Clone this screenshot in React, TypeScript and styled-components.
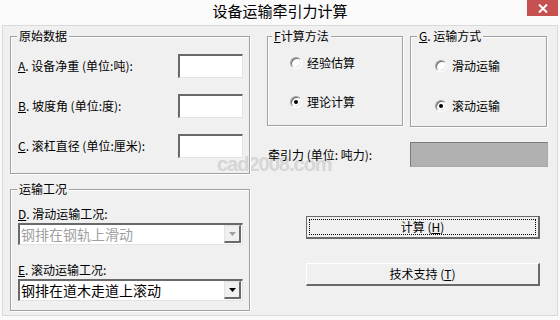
import React from 'react';
import styled, {createGlobalStyle, css} from 'styled-components';

const GlobalStyle = createGlobalStyle`
  html, body {
    margin: 0;
    padding: 0;
    background: #fafafa;
  }
  body {
    font-family: "Noto Sans CJK SC", "Liberation Sans", sans-serif;
    font-size: 12px;
    color: #000;
  }
`

const Underline = styled.span`
  text-decoration: underline;
`

const Radio: React.FC<{checked?: boolean, label: string}> = ({checked, label}) => (
    <RadioRow>
        <RadioCircle $checked={checked}/>
        <span>{label}</span>
    </RadioRow>
)

const Combo: React.FC<{value: string, disabled?: boolean}> = ({value, disabled}) => (
    <ComboBox>
        <ComboText $disabled={disabled}>{value}</ComboText>
        <DropButton>
            <svg width="7" height="4" viewBox="0 0 7 4">
                <polygon points="0,0 7,0 3.5,4" fill={disabled ? '#a0a0a0' : '#000'}/>
            </svg>
        </DropButton>
    </ComboBox>
)

export default function App() {
    return (
        <Window>
            <GlobalStyle/>
            <TitleBar>
                <Title>设备运输牵引力计算</Title>
                <CloseButton>
                    <svg width="10" height="9" viewBox="0 0 10 9">
                        <path d="M1 0.5 L9 8.5 M9 0.5 L1 8.5" stroke="#fff" strokeWidth="2"/>
                    </svg>
                </CloseButton>
            </TitleBar>

            <Client>
                <Watermark>cad2008.com</Watermark>

                <Group>
                    <Caption>原始数据</Caption>
                    <InputRows>
                        <FieldRow>
                            <span><Underline>A</Underline>. 设备净重 (单位:吨):</span>
                            <TextInput/>
                        </FieldRow>
                        <FieldRow>
                            <span><Underline>B</Underline>. 坡度角 (单位:度):</span>
                            <TextInput/>
                        </FieldRow>
                        <FieldRow>
                            <span><Underline>C</Underline>. 滚杠直径 (单位:厘米):</span>
                            <TextInput/>
                        </FieldRow>
                    </InputRows>
                </Group>

                <RightColumn>
                    <MethodRow>
                        <Group $width={136} $height={90}>
                            <Caption $left={4}><Underline>F</Underline>计算方法</Caption>
                            <RadioList $top={19} $left={22} $gap={25}>
                                <Radio label="经验估算"/>
                                <Radio label="理论计算" checked/>
                            </RadioList>
                        </Group>
                        <Group $width={137} $height={91}>
                            <Caption><Underline>G</Underline>. 运输方式</Caption>
                            <RadioList $top={22} $left={24} $gap={26}>
                                <Radio label="滑动运输"/>
                                <Radio label="滚动运输" checked/>
                            </RadioList>
                        </Group>
                    </MethodRow>
                    <ResultRow>
                        <ResultLabel>牵引力 (单位: 吨力):</ResultLabel>
                        <ResultBox/>
                    </ResultRow>
                </RightColumn>

                <Group>
                    <Caption>运输工况</Caption>
                    <ComboList>
                        <ComboLabel><Underline>D</Underline>. 滑动运输工况:</ComboLabel>
                        <Combo value="钢排在钢轨上滑动" disabled/>
                        <ComboLabel $spaced><Underline>E</Underline>. 滚动运输工况:</ComboLabel>
                        <Combo value="钢排在道木走道上滚动"/>
                    </ComboList>
                </Group>

                <Buttons>
                    <PushButton $default>
                        <FocusRect>计算 (<Underline>H</Underline>)</FocusRect>
                    </PushButton>
                    <PushButton>技术支持 (<Underline>T</Underline>)</PushButton>
                </Buttons>
            </Client>
        </Window>
    );
}

const Window = styled.div`
  width: 560px;
  height: 320px;
  display: flex;
  flex-direction: column;
  overflow: hidden;
`

const TitleBar = styled.div`
  height: 25px;
  display: grid;
  grid-template-columns: 1fr auto 1fr;
  align-items: start;
`

const Title = styled.div`
  grid-column: 2;
  font-size: 15px;
  line-height: 22px;
  color: #000;
`

const CloseButton = styled.div`
  grid-column: 3;
  justify-self: end;
  margin-right: 2px;
  width: 31px;
  height: 16px;
  background: #c75050;
  display: flex;
  align-items: center;
  justify-content: center;
`

const Client = styled.div`
  position: relative;
  margin: 0 2px;
  width: 556px;
  height: 291px;
  box-sizing: border-box;
  border: 1px solid #dadada;
  background: #f0f0f0;
  padding: 10px 0 0 7px;
  display: grid;
  grid-template-columns: 240px 281px;
  grid-template-rows: 138px 122px;
  column-gap: 17px;
  row-gap: 15px;
`

const Watermark = styled.div`
  position: absolute;
  left: 214px;
  top: 127px;
  font-family: "Liberation Sans", Arial, sans-serif;
  font-weight: bold;
  font-size: 20px;
  letter-spacing: -1px;
  color: #d6d6d6;
  pointer-events: none;
`

const Group = styled.div<{$width?: number, $height?: number}>`
  position: relative;
  box-sizing: border-box;
  width: ${p => p.$width ? p.$width + 'px' : 'auto'};
  height: ${p => p.$height ? p.$height + 'px' : 'auto'};
  border: 1px solid #a0a0a0;
  box-shadow: inset 1px 1px 0 #fff, 1px 1px 0 #fff;
`

const Caption = styled.div<{$left?: number}>`
  position: absolute;
  top: -8px;
  left: ${p => p.$left ?? 6}px;
  padding: 0 2px;
  background: #f0f0f0;
  line-height: 14px;
  white-space: nowrap;
`

const InputRows = styled.div`
  display: flex;
  flex-direction: column;
  gap: 16px;
  padding: 17px 6px 0 7px;
`

const FieldRow = styled.div`
  display: flex;
  justify-content: space-between;
  align-items: center;
  height: 24px;
  line-height: 14px;
  white-space: nowrap;
`

const sunken = css`
  box-sizing: border-box;
  border-style: solid;
  border-width: 2px 1px 1px 2px;
  border-color: #696969 #e3e3e3 #e3e3e3 #696969;
  background: #fff;
`

const TextInput = styled.div`
  ${sunken};
  width: 65px;
  height: 24px;
`

const RightColumn = styled.div`
  display: flex;
  flex-direction: column;
`

const MethodRow = styled.div`
  display: flex;
  gap: 7px;
  align-items: flex-start;
`

const RadioList = styled.div<{$top: number, $left: number, $gap: number}>`
  display: flex;
  flex-direction: column;
  gap: ${p => p.$gap}px;
  padding: ${p => p.$top}px 0 0 ${p => p.$left}px;
`

const RadioRow = styled.div`
  display: flex;
  align-items: center;
  gap: 5px;
  height: 14px;
  line-height: 14px;
`

const RadioCircle = styled.span<{$checked?: boolean}>`
  position: relative;
  box-sizing: border-box;
  width: 12px;
  height: 12px;
  border-radius: 50%;
  border: 1px solid;
  border-color: #a0a0a0 #fff #fff #a0a0a0;
  background: #fff;
  box-shadow: inset 1px 1px 0 #696969, inset -1px -1px 0 #e3e3e3;

  &::after {
    content: "";
    display: ${p => p.$checked ? 'block' : 'none'};
    position: absolute;
    left: 3px;
    top: 3px;
    width: 4px;
    height: 4px;
    border-radius: 50%;
    background: #000;
  }
`

const ResultRow = styled.div`
  display: flex;
  justify-content: space-between;
  align-items: center;
  margin-top: 15px;
  padding-left: 1px;
  line-height: 14px;
  white-space: nowrap;
`

const ResultLabel = styled.span`
  position: relative;
  z-index: 1;
`

const ResultBox = styled.div`
  box-sizing: border-box;
  width: 138px;
  height: 25px;
  background: #b1b1b1;
  border-style: solid;
  border-width: 1px;
  border-color: #7a7a7a #a8a8a8 #a8a8a8 #7a7a7a;
`

const ComboList = styled.div`
  display: flex;
  flex-direction: column;
  padding: 17px 6px 0 7px;
`

const ComboLabel = styled.div<{$spaced?: boolean}>`
  line-height: 14px;
  margin-top: ${p => p.$spaced ? 18 : 0}px;
  margin-bottom: 2px;
`

const ComboBox = styled.div`
  ${sunken};
  display: flex;
  height: 22px;
`

const ComboText = styled.div<{$disabled?: boolean}>`
  flex: 1;
  padding-left: 1px;
  font-size: 14px;
  line-height: 18px;
  color: ${p => p.$disabled ? '#a0a0a0' : '#000'};
  white-space: nowrap;
  overflow: hidden;
`

const DropButton = styled.div`
  box-sizing: border-box;
  width: 17px;
  height: 18px;
  margin: 0 1px 0 0;
  background: #f0f0f0;
  border-style: solid;
  border-width: 1px 2px 2px 1px;
  border-color: #e3e3e3 #696969 #696969 #e3e3e3;
  display: flex;
  align-items: center;
  justify-content: center;
`

const Buttons = styled.div`
  display: flex;
  flex-direction: column;
  gap: 24px;
  padding: 27px 0 0 39px;
`

const PushButton = styled.div<{$default?: boolean}>`
  box-sizing: border-box;
  width: 234px;
  height: 23px;
  background: #f0f0f0;
  display: flex;
  align-items: center;
  justify-content: center;
  line-height: 14px;
  padding: ${p => p.$default ? '2px' : '0'};
  border-style: solid;
  ${p => p.$default ? css`
    border-width: 1px 2px 2px 1px;
    border-color: #696969;
  ` : css`
    border-width: 1px 2px 2px 1px;
    border-color: #fff #696969 #696969 #fff;
  `}
`

const FocusRect = styled.div`
  flex: 1;
  align-self: stretch;
  display: flex;
  align-items: center;
  justify-content: center;
  border: 1px dotted #000;
`
